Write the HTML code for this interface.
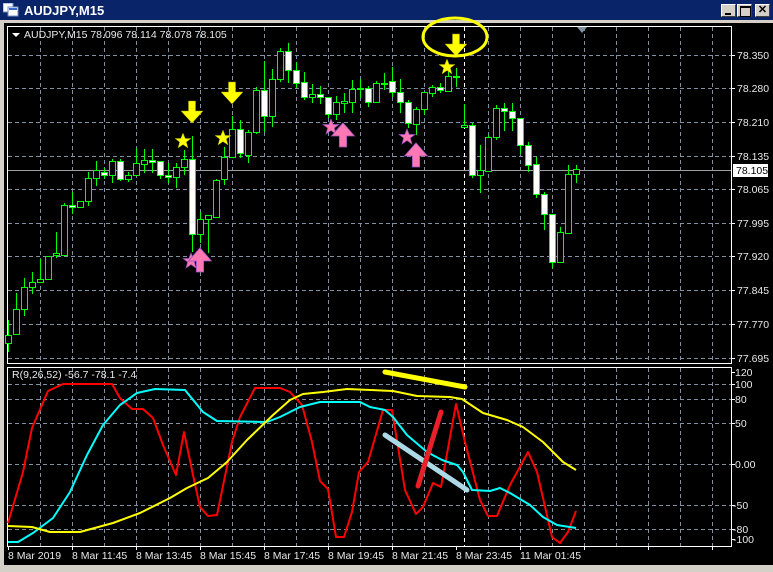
<!DOCTYPE html>
<html><head><meta charset="utf-8"><style>
*{margin:0;padding:0}
body{width:773px;height:572px;overflow:hidden;background:#d4d0c8;font-family:"Liberation Sans",sans-serif;position:relative}
.title{position:absolute;left:0;top:0;width:773px;height:20px;background:#0a246a}
.title span{position:absolute;left:24px;top:3px;color:#fff;font-weight:bold;font-size:13px}
.btn{position:absolute;top:4px;width:15px;height:13px;background:#d4d0c8;border:1px solid;border-color:#fff #404040 #404040 #fff;box-sizing:border-box}
.main{position:absolute;left:4px;top:23px;width:769px;height:542px;background:#000}
svg text{font-family:"Liberation Sans",sans-serif;font-size:10.5px;fill:#e8e8e8}
</style></head><body>
<div class="title">
<svg style="position:absolute;left:3px;top:3px" width="16" height="14"><rect x="0" y="0" width="10" height="9" fill="#fff" stroke="#6c8cc8"/><rect x="5" y="4" width="10" height="9" fill="#fff" stroke="#6c8cc8"/><rect x="6" y="5" width="8" height="2" fill="#3a6ad0"/></svg>
<span>AUDJPY,M15</span>
<div class="btn" style="left:721px"><div style="position:absolute;left:3px;top:8px;width:6px;height:2px;background:#000"></div></div>
<div class="btn" style="left:737px"><div style="position:absolute;left:2px;top:1px;width:9px;height:8px;border:1px solid #000;border-top-width:2px"></div></div>
<div class="btn" style="left:755px;font-size:11px;font-weight:bold;text-align:center;line-height:11px">✕</div>
</div>
<div class="main"></div>
<svg style="position:absolute;left:0;top:0" width="773" height="572">
<g stroke="#8090a0" stroke-width="1" stroke-dasharray="4,3">
<path d="M40.5 27V363M72.5 27V363M104.5 27V363M136.5 27V363M168.5 27V363M200.5 27V363M232.5 27V363M264.5 27V363M296.5 27V363M328.5 27V363M360.5 27V363M392.5 27V363M424.5 27V363M488.5 27V363M520.5 27V363M552.5 27V363M584.5 27V363M616.5 27V363M648.5 27V363M680.5 27V363M712.5 27V363"/>
<path d="M40.5 368V546M72.5 368V546M104.5 368V546M136.5 368V546M168.5 368V546M200.5 368V546M232.5 368V546M264.5 368V546M296.5 368V546M328.5 368V546M360.5 368V546M392.5 368V546M424.5 368V546M488.5 368V546M520.5 368V546M552.5 368V546M584.5 368V546M616.5 368V546M648.5 368V546M680.5 368V546M712.5 368V546"/>
<path d="M8 55.5H731M8 88.5H731M8 122.5H731M8 156.5H731M8 189.5H731M8 223.5H731M8 256.5H731M8 290.5H731M8 324.5H731M8 358.5H731"/>
<path d="M8 384.5H731M8 399.5H731M8 423.5H731M8 464.5H731M8 505.5H731M8 529.5H731"/>
</g>
<path d="M464.5 27V546" stroke="#fff" stroke-dasharray="4,3"/>
<path d="M8 170.5H731" stroke="#a0a0a0"/>
<g fill="none" stroke="#fff"><rect x="7.5" y="26.5" width="724" height="337"/><rect x="7.5" y="367.5" width="724" height="179"/></g>
<g stroke="#fff"><path d="M731 55.5h4M731 88.5h4M731 122.5h4M731 156.5h4M731 189.5h4M731 223.5h4M731 256.5h4M731 290.5h4M731 324.5h4M731 358.5h4M731 372.5h4M731 384.5h4M731 399.5h4M731 423.5h4M731 464.5h4M731 505.5h4M731 529.5h4M731 539.5h4"/>
<path d="M8.5 546v4M72.5 546v4M136.5 546v4M200.5 546v4M264.5 546v4M328.5 546v4M392.5 546v4M456.5 546v4M520.5 546v4M584.5 546v4M648.5 546v4M712.5 546v4" /></g>
<path d="M577 27l5 6l5-6z" fill="#8090a0"/>
<g stroke="#00ff00">
<path d="M8.5 320V352M16.5 293V334M24.5 278V316M32.5 272V294M40.5 259V282M48.5 256V280M56.5 232V258M64.5 203V255M72.5 192V214M80.5 201V207M88.5 172V206M96.5 161V186M104.5 168V179M112.5 159V183M120.5 159V181M128.5 172V182M136.5 148V176M144.5 149V173M152.5 149V173M160.5 161V179M168.5 163V183M176.5 163V188M184.5 150V175M192.5 136V252M200.5 212V243M208.5 215V253M216.5 179V218M224.5 147V185M232.5 116V157M240.5 120V158M248.5 130V163M256.5 87V134M264.5 61V132M272.5 69V127M280.5 48V82M288.5 43V83M296.5 62V88M304.5 72V100M312.5 84V103M320.5 86V104M328.5 97V118M336.5 96V120M344.5 93V113M352.5 80V113M360.5 79V98M368.5 86V107M376.5 81V103M384.5 73V90M392.5 67V97M400.5 79V113M408.5 100V128M416.5 107V135M424.5 92V115M432.5 85V97M440.5 83V93M448.5 68V92M456.5 68V87M464.5 104V127M472.5 123V178M480.5 145V193M488.5 135V172M496.5 105V140M504.5 103V131M512.5 103V131M520.5 118V154M528.5 142V172M536.5 157V198M544.5 192V230M552.5 214V268M560.5 227V263M568.5 165V233M576.5 165V183"/>
</g>
<g stroke="#00ff00" stroke-width="1">
<rect x="5.5" y="335.5" width="6" height="8" fill="#000"/><rect x="13.5" y="309.5" width="6" height="25" fill="#000"/><rect x="21.5" y="287.5" width="6" height="22" fill="#000"/><rect x="29.5" y="282.5" width="6" height="5" fill="#000"/><rect x="37.5" y="279.5" width="6" height="3" fill="#000"/><rect x="45.5" y="256.5" width="6" height="23" fill="#000"/><rect x="53.5" y="253.5" width="6" height="2" fill="#000"/><rect x="61.5" y="205.5" width="6" height="50" fill="#000"/><rect x="69.5" y="205.5" width="6" height="2" fill="#fff"/><rect x="77.5" y="201.5" width="6" height="6" fill="#000"/><rect x="85.5" y="178.5" width="6" height="23" fill="#000"/><rect x="93.5" y="170.5" width="6" height="8" fill="#000"/><rect x="101.5" y="172.5" width="6" height="3" fill="#fff"/><rect x="109.5" y="161.5" width="6" height="14" fill="#000"/><rect x="117.5" y="161.5" width="6" height="18" fill="#fff"/><rect x="125.5" y="175.5" width="6" height="4" fill="#000"/><rect x="133.5" y="163.5" width="6" height="12" fill="#000"/><rect x="141.5" y="160.5" width="6" height="4" fill="#000"/><rect x="149.5" y="160.5" width="6" height="2" fill="#fff"/><rect x="157.5" y="161.5" width="6" height="14" fill="#fff"/><rect x="165.5" y="175.5" width="6" height="2" fill="#fff"/><rect x="173.5" y="167.5" width="6" height="10" fill="#000"/><rect x="181.5" y="159.5" width="6" height="8" fill="#000"/><rect x="189.5" y="159.5" width="6" height="75" fill="#fff"/><rect x="197.5" y="219.5" width="6" height="15" fill="#000"/><rect x="205.5" y="215.5" width="6" height="4" fill="#000"/><rect x="213.5" y="180.5" width="6" height="37" fill="#000"/><rect x="221.5" y="157.5" width="6" height="22" fill="#000"/><rect x="229.5" y="129.5" width="6" height="28" fill="#000"/><rect x="237.5" y="129.5" width="6" height="24" fill="#fff"/><rect x="245.5" y="132.5" width="6" height="23" fill="#000"/><rect x="253.5" y="90.5" width="6" height="42" fill="#000"/><rect x="261.5" y="90.5" width="6" height="26" fill="#fff"/><rect x="269.5" y="79.5" width="6" height="37" fill="#000"/><rect x="277.5" y="51.5" width="6" height="28" fill="#000"/><rect x="285.5" y="51.5" width="6" height="19" fill="#fff"/><rect x="293.5" y="70.5" width="6" height="13" fill="#fff"/><rect x="301.5" y="82.5" width="6" height="15" fill="#fff"/><rect x="309.5" y="94.5" width="6" height="3" fill="#000"/><rect x="317.5" y="94.5" width="6" height="3" fill="#fff"/><rect x="325.5" y="97.5" width="6" height="17" fill="#fff"/><rect x="333.5" y="102.5" width="6" height="12" fill="#000"/><rect x="341.5" y="101.5" width="6" height="2" fill="#000"/><rect x="349.5" y="89.5" width="6" height="13" fill="#000"/><rect x="357.5" y="88.5" width="6" height="1" fill="#000"/><rect x="365.5" y="88.5" width="6" height="14" fill="#fff"/><rect x="373.5" y="83.5" width="6" height="19" fill="#000"/><rect x="381.5" y="83.5" width="6" height="1" fill="#000"/><rect x="389.5" y="81.5" width="6" height="11" fill="#fff"/><rect x="397.5" y="92.5" width="6" height="10" fill="#fff"/><rect x="405.5" y="102.5" width="6" height="21" fill="#fff"/><rect x="413.5" y="109.5" width="6" height="15" fill="#000"/><rect x="421.5" y="92.5" width="6" height="17" fill="#000"/><rect x="429.5" y="87.5" width="6" height="6" fill="#000"/><rect x="437.5" y="87.5" width="6" height="3" fill="#fff"/><rect x="445.5" y="76.5" width="6" height="15" fill="#000"/><rect x="453.5" y="76.5" width="6" height="1" fill="#fff"/><rect x="461.5" y="125.5" width="6" height="2" fill="#000"/><rect x="469.5" y="125.5" width="6" height="50" fill="#fff"/><rect x="477.5" y="170.5" width="6" height="5" fill="#000"/><rect x="485.5" y="137.5" width="6" height="34" fill="#000"/><rect x="493.5" y="108.5" width="6" height="29" fill="#000"/><rect x="501.5" y="108.5" width="6" height="3" fill="#fff"/><rect x="509.5" y="111.5" width="6" height="7" fill="#fff"/><rect x="517.5" y="118.5" width="6" height="27" fill="#fff"/><rect x="525.5" y="145.5" width="6" height="20" fill="#fff"/><rect x="533.5" y="164.5" width="6" height="30" fill="#fff"/><rect x="541.5" y="194.5" width="6" height="20" fill="#fff"/><rect x="549.5" y="214.5" width="6" height="48" fill="#fff"/><rect x="557.5" y="232.5" width="6" height="30" fill="#000"/><rect x="565.5" y="174.5" width="6" height="59" fill="#000"/><rect x="573.5" y="169.5" width="6" height="5" fill="#000"/>
</g>
<defs>
<path id="da" d="M-3.5 0H3.5V10H11L0 22L-11 10H-3.5Z"/>
<path id="st" d="M0 -8L2.2 -2.5L8 -2.5L3.3 1L5 7L0 3.5L-5 7L-3.3 1L-8 -2.5L-2.2 -2.5Z"/>
</defs>
<g fill="#ffff00" stroke="#a0a000" stroke-width="0.5">
<use href="#da" x="192" y="101"/><use href="#da" x="232" y="82"/><use href="#da" x="456" y="34"/>
<use href="#st" x="183" y="141"/><use href="#st" x="223" y="138"/><use href="#st" x="447" y="67"/>
</g>
<g fill="#ff78b4" stroke="#9050c0" stroke-width="0.7">
<use href="#st" x="191" y="261"/><use href="#st" x="331" y="127"/><use href="#st" x="407" y="137"/>
<use href="#da" transform="translate(200,272) scale(1.05,-1.1)"/><use href="#da" transform="translate(343,147) scale(1.05,-1.1)"/><use href="#da" transform="translate(416,167) scale(1.05,-1.1)"/>
</g>
<ellipse cx="455" cy="37" rx="32" ry="19" fill="none" stroke="#ffff00" stroke-width="3"/>
<g fill="none" stroke-width="2" stroke-linejoin="round">
<polyline stroke="#ff0000" points="8,523 23,472 32,428 48,391 63,384 112,384 120,398 132,409 143,409 153,418 163,445 176,475 184,432 193,475 200,507 208,516 217,515 232,442 240,417 255,388 280,388 290,392 302,405 312,442 320,481 328,489 336,537 344,537 352,512 359,472 368,462 383,410 392,410 405,490 416,514 423,507 433,483 441,487 456,404 465,442 480,500 488,516 497,516 510,485 528,452 537,472 552,537 560,543 568,532 576,511"/>
<polyline stroke="#00ffff" points="8,542 18,542 33,533 53,518 70,492 87,455 103,425 120,405 137,393 155,389 185,390 203,412 217,421 267,422 280,417 300,407 320,402 360,402 370,407 385,410 393,417 407,435 427,452 442,460 457,465 463,472 472,490 490,491 500,488 510,493 530,505 543,517 557,525 576,528"/>
<polyline stroke="#ffff00" points="8,526 32,527 50,532 80,532 113,523 140,513 170,498 187,488 208,478 227,462 247,440 273,415 290,400 303,394 323,392 347,389 393,391 417,396 450,397 462,399 483,413 507,420 523,427 543,442 563,462 576,470"/>
</g>
<g stroke-width="5" stroke-linecap="round">
<path d="M385 372L465 387" stroke="#ffff00"/>
<path d="M385 435L467 490" stroke="#add8e6"/>
<path d="M418 486L441 412" stroke="#e8202a"/>
</g>
<path d="M12 33l4 4l4-4z" fill="#fff"/>
<text x="24" y="38">AUDJPY,M15  78.096 78.114 78.078 78.105</text>
<text x="12" y="378">R(9,26,52) -56.7 -78.1 -7.4</text>
<g>
<text x="737" y="59">78.350</text><text x="737" y="92">78.280</text><text x="737" y="126">78.210</text><text x="737" y="160">78.135</text><text x="737" y="193">78.065</text><text x="737" y="227">77.995</text><text x="737" y="260">77.920</text><text x="737" y="294">77.845</text><text x="737" y="328">77.770</text><text x="737" y="362">77.695</text>
<text x="735" y="376">120</text><text x="735" y="388">100</text><text x="735" y="403">80</text><text x="735" y="427">50</text><text x="735" y="468">0.00</text><text x="733" y="509">-50</text><text x="733" y="533">-80</text><text x="733" y="543">-100</text>
</g>
<rect x="733" y="164" width="35" height="13" fill="#fff"/>
<text x="736" y="174" style="fill:#000">78.105</text>
<g>
<text x="8" y="559">8 Mar 2019</text><text x="72" y="559">8 Mar 11:45</text><text x="136" y="559">8 Mar 13:45</text><text x="200" y="559">8 Mar 15:45</text><text x="264" y="559">8 Mar 17:45</text><text x="328" y="559">8 Mar 19:45</text><text x="392" y="559">8 Mar 21:45</text><text x="456" y="559">8 Mar 23:45</text><text x="520" y="559">11 Mar 01:45</text>
</g>
</svg>
</body></html>
